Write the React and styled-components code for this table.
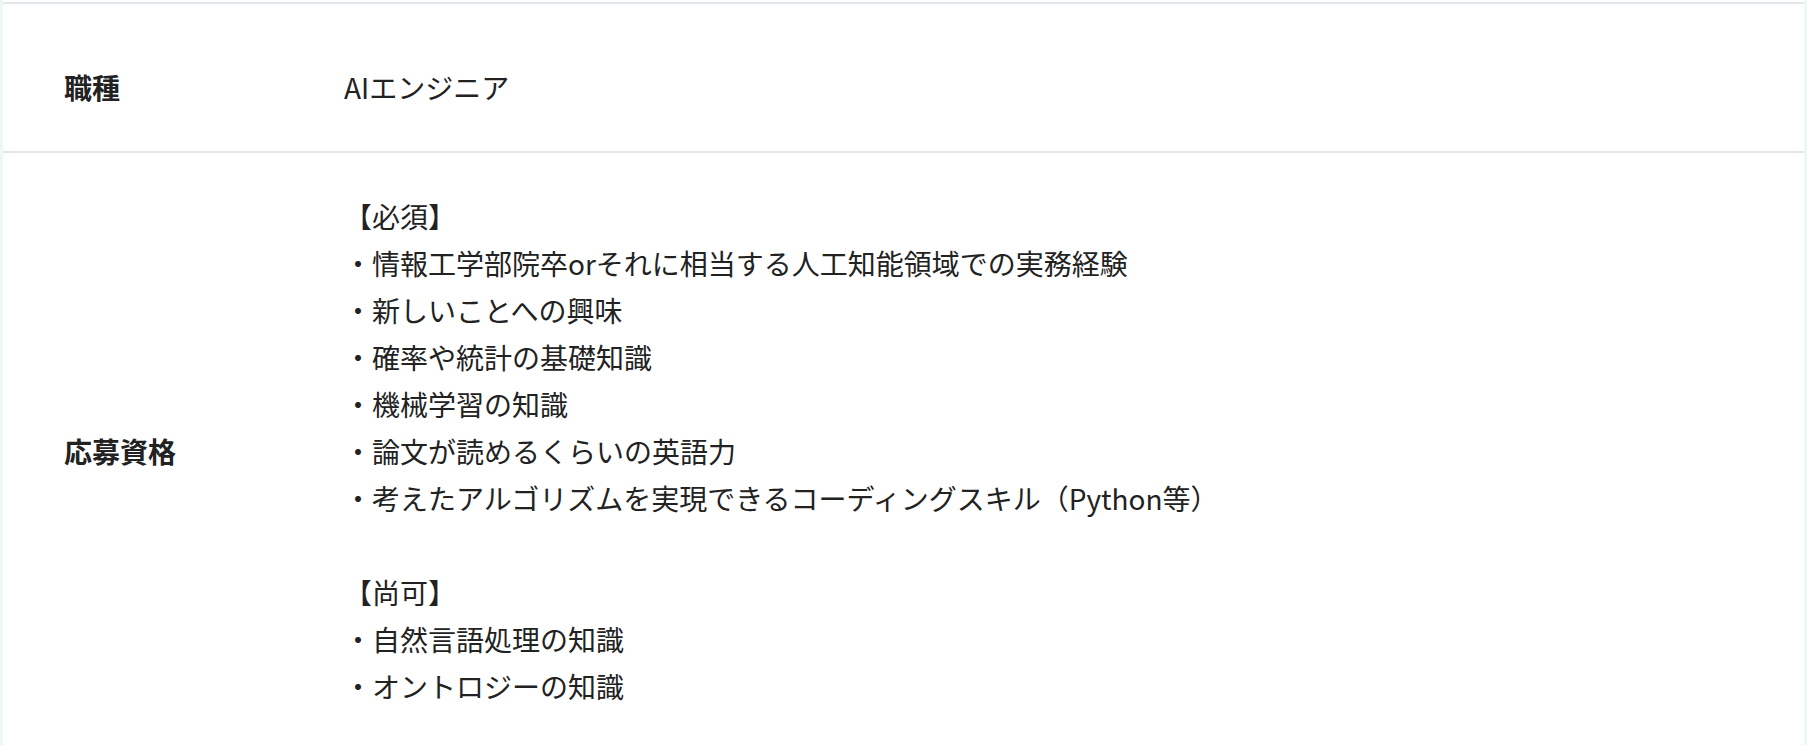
import styled, { createGlobalStyle } from "styled-components";

const GlobalStyle = createGlobalStyle`
    * {
        box-sizing: border-box;
        margin: 0;
        padding: 0;
    }

    body {
        background: #eef8f2;
        font-family: "Noto Sans CJK JP", "Noto Sans", sans-serif;
        color: #222222;
    }
`;

const requirements = {
    must: [
        "情報工学部院卒orそれに相当する人工知能領域での実務経験",
        "新しいことへの興味",
        "確率や統計の基礎知識",
        "機械学習の知識",
        "論文が読めるくらいの英語力",
        "考えたアルゴリズムを実現できるコーディングスキル（Python等）",
    ],
    nice: [
        "自然言語処理の知識",
        "オントロジーの知識",
    ],
};

export default function App() {
    function renderGroup(title, items) {
        return (
            <>
                <Line>【{title}】</Line>
                {items.map((item) => (
                    <Line key={item}>・{item}</Line>
                ))}
            </>
        );
    }

    return (
        <Page>
            <GlobalStyle />
            <Panel>
                <Table>
                    <Row $top={60} $bottom={40}>
                        <Label>職種</Label>
                        <Value>
                            <Line>AIエンジニア</Line>
                        </Value>
                    </Row>
                    <Row $top={40} $bottom={40}>
                        <Label>応募資格</Label>
                        <Value>
                            {renderGroup("必須", requirements.must)}
                            <Blank />
                            {renderGroup("尚可", requirements.nice)}
                        </Value>
                    </Row>
                </Table>
            </Panel>
        </Page>
    );
}

const Page = styled.div`
    width: 100%;
    min-height: 100vh;
    padding: 0 3px;
    background: #eef8f2;
`;

const Panel = styled.div`
    background: #ffffff;
    min-height: 100vh;
    padding-top: 2px;
`;

const Table = styled.dl`
    width: 100%;
    display: flex;
    flex-direction: column;
`;

const Row = styled.div`
    display: grid;
    grid-template-columns: 341px 1fr;
    border-top: 2px solid #e2e7ec;
    padding-top: ${(p) => p.$top}px;
    padding-bottom: ${(p) => p.$bottom}px;
`;

const Label = styled.dt`
    align-self: center;
    padding-left: 61px;
    font-weight: 700;
    font-size: 28px;
    line-height: 47px;
`;

const Value = styled.dd`
    display: flex;
    flex-direction: column;
    font-size: 28px;
    line-height: 47px;
`;

const Line = styled.p`
    white-space: nowrap;
`;

const Blank = styled.div`
    height: 47px;
`;
